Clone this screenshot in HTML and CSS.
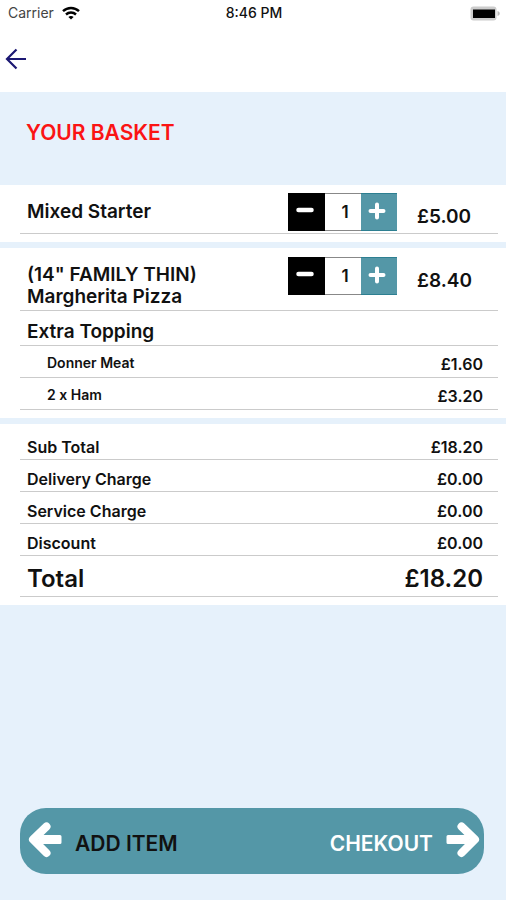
FILE: index.html
```html
<!DOCTYPE html>
<html lang="en">
<head>
<meta charset="utf-8">
<meta name="viewport" content="width=device-width, initial-scale=1">
<title>Your Basket</title>
<link rel="stylesheet" href="styles.css">
</head>
<body>
<div class="status">
  <div class="carrier"><span>Carrier</span>
    <svg width="18" height="14" viewBox="0 0 18 14" fill="none" stroke="#000" stroke-width="2.4" aria-hidden="true"><path d="M1 5.2C5.5.9 12.500.9 17 5.200"/><path d="M4 8.500c2.800-2.600 7.200-2.600 10 0"/><path d="M9 13.600 6.400 11c1.500-1.200 3.700-1.200 5.200 0z" fill="#000" stroke="none"/></svg>
  </div>
  <time>8:46 PM</time>
  <svg class="battery" width="30" height="15" viewBox="0 0 30 15" aria-hidden="true"><rect x=".5" y=".5" width="26" height="14" rx="3" fill="#ccc"/><path d="M27.500 5c3 1 3 4 0 5z" fill="#bbb"/><rect x="3" y="3.500" width="22" height="8.500" fill="#000"/></svg>
</div>
<header class="nav">
  <button class="back" type="button" aria-label="Back"><svg width="22" height="22" viewBox="0 0 22 22" fill="none" stroke="#1c1873" stroke-width="2.200"><path d="M21 11H2.500M11.500 1.500 2 11l9.500 9.500"/></svg></button>
</header>
<main>
  <h1>YOUR BASKET</h1>
  <section class="card">
    <div class="row item">
      <h2>Mixed Starter</h2>
      <div class="stepper">
        <button class="minus" type="button" aria-label="Remove one Mixed Starter"><svg width="18" height="18" viewBox="0 0 18 18" stroke="#fff" stroke-width="4.500" stroke-linecap="round"><path d="M2.500 9h13"/></svg></button>
        <input type="text" inputmode="numeric" value="1" aria-label="Mixed Starter quantity">
        <button class="plus" type="button" aria-label="Add one Mixed Starter"><svg width="18" height="18" viewBox="0 0 18 18" stroke="#fff" stroke-width="4" stroke-linecap="round"><path d="M2.500 9h13M9 2.500v13"/></svg></button>
      </div>
      <span class="price">£5.00</span>
    </div>
  </section>
  <section class="card">
    <div class="row item tall">
      <h2>(14" FAMILY THIN)<br>Margherita Pizza</h2>
      <div class="stepper">
        <button class="minus" type="button" aria-label="Remove one Margherita Pizza"><svg width="18" height="18" viewBox="0 0 18 18" stroke="#fff" stroke-width="4.500" stroke-linecap="round"><path d="M2.500 9h13"/></svg></button>
        <input type="text" inputmode="numeric" value="1" aria-label="Margherita Pizza quantity">
        <button class="plus" type="button" aria-label="Add one Margherita Pizza"><svg width="18" height="18" viewBox="0 0 18 18" stroke="#fff" stroke-width="4" stroke-linecap="round"><path d="M2.500 9h13M9 2.500v13"/></svg></button>
      </div>
      <span class="price">£8.40</span>
    </div>
    <div class="row subhead"><h2>Extra Topping</h2></div>
    <div class="row extra"><span>Donner Meat</span><b>£1.60</b></div>
    <div class="row extra"><span>2 x Ham</span><b>£3.20</b></div>
  </section>
  <section class="card totals">
    <div class="row"><span>Sub Total</span><b>£18.20</b></div>
    <div class="row"><span>Delivery Charge</span><b>£0.00</b></div>
    <div class="row"><span>Service Charge</span><b>£0.00</b></div>
    <div class="row"><span>Discount</span><b>£0.00</b></div>
    <div class="row total"><span>Total</span><b>£18.20</b></div>
  </section>
</main>
<footer class="actions">
  <button class="add" type="button"><svg width="34" height="36" viewBox="0 0 34 36" fill="#fff" stroke="#fff" stroke-linejoin="round" stroke-linecap="round"><path d="M12 14.500h20v6H12z" stroke-width="3"/><path d="M18.500 4.500 5 17.500l13.500 13.500" fill="none" stroke-width="8"/></svg><span>ADD ITEM</span></button>
  <button class="checkout" type="button"><span>CHEKOUT</span><svg width="34" height="36" viewBox="0 0 34 36" fill="#fff" stroke="#fff" stroke-linejoin="round" stroke-linecap="round"><path d="M2 14.500h20v6H2z" stroke-width="3"/><path d="M15.500 4.500 29 17.500 15.500 31" fill="none" stroke-width="8"/></svg></button>
</footer>
</body>
</html>
```
FILE: styles.css
```css
* { box-sizing: border-box; }
body {
  margin: 0;
  min-height: 100vh;
  display: flex;
  flex-direction: column;
  background: #e6f1fb;
  color: #111;
  font: 600 16px/20px Inter, "Liberation Sans", sans-serif;
}
h1, h2 { margin: 0; font-weight: 600; }
b { font-weight: 600; }
button { border: 0; padding: 0; font: inherit; color: inherit; background: none; cursor: pointer; }
svg { display: block; flex: none; }

.status {
  display: grid;
  grid-template-columns: 1fr auto 1fr;
  align-items: center;
  height: 26px;
  padding: 0 6px 0 8px;
  background: #fff;
  font-size: 14px;
  font-weight: 400;
}
.status time { font-weight: 500; }
.carrier { display: flex; align-items: center; gap: 8px; color: #444; }
.battery { justify-self: end; }
.nav { display: flex; align-items: center; height: 66px; padding: 0 5px; background: #fff; }

h1 { padding: 29px 26px 40px; font-size: 21px; line-height: 24px; color: #fb1414; }
.card { margin-bottom: 6px; padding: 0 8px 8px 20px; background: #fff; }
.row {
  display: flex;
  align-items: center;
  justify-content: space-between;
  min-height: 32px;
  padding: 0 15px 0 7px;
  border-bottom: 1px solid #cbcbcb;
}
h2 { font-size: 19px; line-height: 22px; }
.item {
  display: grid;
  grid-template-columns: 1fr 109px 66px;
  column-gap: 20px;
  align-items: start;
  min-height: 49px;
  padding-top: 9px;
}
.item h2 { padding-top: 7px; }
.tall { min-height: 63px; }
.price { padding-top: 14px; font-size: 19px; }
.stepper { display: grid; grid-template-columns: 37px 36px 36px; height: 39px; }
.stepper button { display: grid; justify-content: center; align-items: start; padding-top: 8px; }
.stepper .minus { padding-right: 3px; background: #000; }
.stepper .plus { padding-right: 4px; background: #5497a7; border: solid #2d7f91; border-width: 1px 0; }
.stepper input {
  width: 100%;
  min-width: 0;
  margin: 0;
  padding: 0 0 0 4px;
  border: solid #888;
  border-width: 1px 0;
  border-radius: 0;
  background: #fff;
  color: inherit;
  font: inherit;
  font-size: 17px;
  text-align: center;
}
.subhead { min-height: 35px; padding-top: 8px; }
.extra { font-size: 14px; }
.extra span { padding: 2px 0 0 20px; }
.extra b { padding-top: 5px; font-size: 16px; }
.totals { margin: 0; padding-top: 4px; }
.totals .row { padding-top: 7px; }
.totals .total { min-height: 41px; padding-top: 6px; font-size: 24px; }
.totals .total b { font-size: 24px; }

.item .stepper { height: 38px; }
.card:first-of-type .item { min-height: 49px; padding-top: 8px; }
.card:first-of-type h2 { padding-top: 8px; }

.actions {
  display: flex;
  justify-content: space-between;
  margin: auto 22px 26px 20px;
  height: 66px;
  padding: 0 4px 0 8px;
  border-radius: 26px;
  background: #5497a7;
  font-size: 21px;
}
.actions button { display: flex; align-items: center; gap: 13px; }
.actions svg { margin-bottom: 2px; }
.actions span { padding-top: 6px; }
.checkout { color: #fff; }
```
